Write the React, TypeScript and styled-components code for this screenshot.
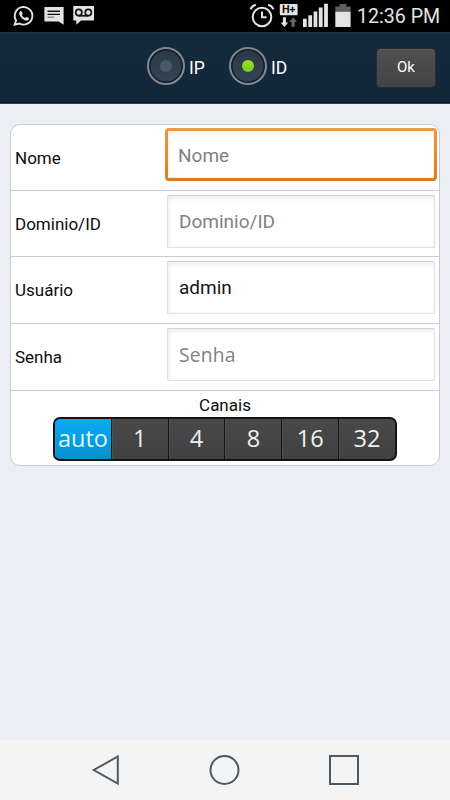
import React, { useState } from "react";
import styled, { createGlobalStyle, css } from "styled-components";

const GlobalStyle = createGlobalStyle`
  *, *::before, *::after { box-sizing: border-box; }
  html, body { margin: 0; padding: 0; }
  body { font-family: Roboto, "Liberation Sans", sans-serif; background: #edeef3; }
`;

const Screen = styled.div`
  display: flex;
  flex-direction: column;
  width: 450px;
  height: 800px;
  overflow: hidden;
  background: #edeef3;
`;

const StatusBar = styled.header`
  display: flex;
  justify-content: space-between;
  height: 32px;
  flex: none;
  background: #000;
  color: #e4e4e4;
`;

const StatusIcons = styled.svg`
  display: block;
  height: 32px;
`;

const StatusRight = styled.div`
  display: flex;
  padding-right: 9px;
`;

const Clock = styled.span`
  width: 84px;
  margin-left: 5px;
  font-size: 19.6px;
  line-height: 33px;
  white-space: nowrap;
`;

const TopBar = styled.div`
  display: flex;
  align-items: center;
  height: 72px;
  flex: none;
  padding: 0 14px 4px 147px;
  background: linear-gradient(#18334a 0, #13293c 3px, #12283a 68px, #0a1b2b 71px, #5b6876 72px);
`;

const RadioOption = styled.button`
  display: flex;
  align-items: center;
  width: 82px;
  padding: 0;
  border: 0;
  background: none;
  color: #fff;
  font: 17.5px/24px Roboto, sans-serif;
  text-align: left;
`;

const RadioRing = styled.span`
  display: flex;
  align-items: center;
  justify-content: center;
  width: 38px;
  height: 38px;
  margin-right: 4px;
  flex: none;
  border: 2px solid #808890;
  border-radius: 50%;
  background: linear-gradient(#2a3947, #344453);
  box-shadow: inset 0 0 0 1.5px #101b27;
`;

const RadioDot = styled.span<{ $on: boolean }>`
  width: 12px;
  height: 12px;
  border-radius: 50%;
  background: ${(p) => (p.$on ? "linear-gradient(#95e52c, #7bcb14)" : "#4d5862")};
`;

const RadioLabel = styled.span`
  padding-top: 4px;
`;

const OkButton = styled.button`
  width: 60px;
  height: 40px;
  margin: 3px 0 0 auto;
  padding: 0 0 2px;
  border: 1px solid #292b2d;
  border-radius: 4px;
  background: linear-gradient(#505050, #434343);
  box-shadow: inset 0 1px 0 #5c5c5c;
  color: #fff;
  font: 15px/20px Roboto, sans-serif;
`;

const Content = styled.main`
  flex: 1;
  padding: 20px 10px 0;
`;

const Card = styled.form`
  height: 342px;
  border: 1px solid #c3cad8;
  border-radius: 10px;
  background: #fff;
  overflow: hidden;
`;

const Row = styled.label`
  display: flex;
  height: 66.7px;
  border-bottom: 1px solid #c6ccda;
  &:first-child { height: 65.6px; }
`;

const RowLabel = styled.span`
  width: 156px;
  padding: 22px 0 0 4px;
  flex: none;
  color: #0c0c0c;
  font-size: 17px;
  line-height: 22px;
`;

const Input = styled.input<{ $active?: boolean; $fallback?: boolean }>`
  width: 268px;
  height: 53px;
  margin-top: 4px;
  padding: 0 0 0 11px;
  border: 1px solid #dedfe2;
  border-top-color: #d3d4d6;
  border-radius: 1px;
  outline: 0;
  background: #fff;
  box-shadow: inset 0 4px 6px -2px #ededee, inset 2px 0 4px -1px #f0f0f1;
  color: #141414;
  font: ${(p) => (p.$fallback ? '19.3px/26px "Open Sans", "Noto Sans"' : "19px/26px Roboto")}, sans-serif;
  letter-spacing: ${(p) => (p.$fallback ? "0.2px" : "0")};
  &::placeholder { color: #818181; opacity: 1; }
  ${(p) =>
    p.$active &&
    css`
      width: 272px;
      height: 53px;
      margin: 3px 0 0 -2px;
      padding: 1px 0 0 10px;
      border: 3px solid transparent;
      border-radius: 4px;
      background: linear-gradient(#fff, #fff) padding-box,
        linear-gradient(#eb9b40, #dc7b20) border-box;
      box-shadow: inset 0 0 0 1px #fff2df, inset 0 5px 6px -2px #f2f2f2;
    `}
`;

const Channels = styled.div`
  display: flex;
  flex-direction: column;
  align-items: center;
  padding-top: 4px;
`;

const ChannelsTitle = styled.span`
  padding-bottom: 1px;
  color: #0c0c0c;
  font-size: 17px;
  line-height: 21px;
`;

const Segments = styled.div`
  display: flex;
  width: 344px;
  height: 44px;
  border: 2px solid #141414;
  border-radius: 7px;
  overflow: hidden;
  background: #141414;
`;

const Segment = styled.button<{ $on: boolean }>`
  flex: 1 1 0;
  min-width: 0;
  padding: 0 0 1px;
  border: 0;
  border-right: 1.5px solid #161616;
  background: ${(p) => (p.$on ? "linear-gradient(#0aa9f8, #0490cc)" : "linear-gradient(#494949, #414141)")};
  box-shadow: inset 1px 0 0 ${(p) => (p.$on ? "#0aa2e8" : "#505050")};
  color: ${(p) => (p.$on ? "#dff7ff" : "#f0f0f0")};
  font: 23.5px/30px "Open Sans", "Noto Sans", sans-serif;
  &:last-child { border-right: 0; }
`;

const NavBar = styled.nav`
  display: flex;
  justify-content: center;
  align-items: center;
  gap: 88px;
  height: 60px;
  flex: none;
  padding-right: 1px;
  background: #f4f4f4;
`;

const NavIcon = styled.svg`
  width: 31px;
  height: 32px;
  fill: none;
  stroke: #4d5963;
  stroke-width: 2;
`;

const Notifications = () => (
  <StatusIcons width="110" viewBox="0 0 110 32" fill="#e4e4e4">
    <path d="M14.7 24.7l1.4-4.3a8.8 8.8 0 1 1 3.3 3.1z" fill="none" stroke="#e4e4e4" strokeWidth="1.9" />
    <path d="M20.1 11.4c.5-.6 1.4-.5 1.7.2l.8 1.8c.2.5-.3 1-.8 1.6.8 1.5 1.9 2.5 3.5 3.1.6-.8 1-1.4 1.6-1.1l1.8.9c.7.5-.1 1.9-.7 2.3-1.4.9-3.3.2-4.9-.9-1.7-1.2-3.7-3.4-3.9-5.5-.1-1 .3-1.8.9-2.4z" />
    <path d="M44.4 7H63.6V24.8L58.8 21.5H44.4z" />
    <path d="M47.5 11.2H60M47.5 14.4H60" stroke="#111" strokeWidth="1.4" />
    <path d="M47.5 17.2H54" stroke="#777" strokeWidth="1.2" />
    <path d="M73.3 6H94V20.4H81L76.3 24.7V20.4H73.3z" />
    <g fill="none" stroke="#111" strokeWidth="1.7">
      <circle cx="78.8" cy="12.5" r="3.1" />
      <circle cx="88.3" cy="12.5" r="3.1" />
      <path d="M78.8 15.8h9.5" />
    </g>
  </StatusIcons>
);

const SystemState = () => (
  <StatusIcons width="106" viewBox="246 0 106 32" fill="#e4e4e4">
    <g fill="none" stroke="#e4e4e4" strokeWidth="2">
      <circle cx="262" cy="17" r="9.3" />
      <path d="M262 11.6v5.7h4.5" />
      <path d="M250.5 9.2q1.6-3.4 5.3-4.5M273.5 9.2q-1.6-3.4-5.3-4.5" />
    </g>
    <rect x="279.8" y="4" width="17.8" height="11.2" rx="1" />
    <text x="288.7" y="13.2" fill="#111" fontFamily="Roboto, sans-serif" fontSize="10.8" fontWeight="700" textAnchor="middle">H+</text>
    <path d="M282.9 17.3h3v5.2h2.3l-3.8 4.6-3.8-4.6h2.3z" />
    <path d="M291.5 26.8h3.2v-4.9h2.3l-3.9-4.6-3.9 4.6h2.3z" fill="#666" />
    <path d="M303 18.7h3.7V27H303zM308.3 15.2h3.8V27h-3.8zM313.6 11.5h3.7V27h-3.7zM318.8 7.5h3.8V27h-3.8zM324.1 3.7h3.8V27h-3.8z" />
    <path d="M335.3 12V6.4h4.2V4h6.8v2.4h4.3V12z" fill="#5e5e5e" />
    <path d="M335.3 11.8h15.3V27h-15.3z" />
  </StatusIcons>
);

const FIELDS = [
  { label: "Nome", placeholder: "Nome", value: "" },
  { label: "Dominio/ID", placeholder: "Dominio/ID", value: "" },
  { label: "Usuário", placeholder: "Usuário", value: "admin" },
  { label: "Senha", placeholder: "Senha", value: "" },
];

const CHANNELS = ["auto", "1", "4", "8", "16", "32"];

export default function App() {
  const [mode, setMode] = useState("ID");
  const [channel, setChannel] = useState("auto");
  const [active, setActive] = useState("Nome");

  return (
    <>
      <GlobalStyle />
      <Screen>
        <StatusBar>
          <Notifications />
          <StatusRight>
            <SystemState />
            <Clock>12:36 PM</Clock>
          </StatusRight>
        </StatusBar>
        <TopBar>
          {["IP", "ID"].map((name) => (
            <RadioOption key={name} onClick={() => setMode(name)}>
              <RadioRing>
                <RadioDot $on={mode === name} />
              </RadioRing>
              <RadioLabel>{name}</RadioLabel>
            </RadioOption>
          ))}
          <OkButton>Ok</OkButton>
        </TopBar>
        <Content>
          <Card>
            {FIELDS.map((f) => (
              <Row key={f.label}>
                <RowLabel>{f.label}</RowLabel>
                <Input
                  $active={active === f.label}
                  $fallback={f.label === "Senha"}
                  onFocus={() => setActive(f.label)}
                  placeholder={f.placeholder}
                  defaultValue={f.value}
                />
              </Row>
            ))}
            <Channels>
              <ChannelsTitle>Canais</ChannelsTitle>
              <Segments>
                {CHANNELS.map((c) => (
                  <Segment key={c} type="button" $on={channel === c} onClick={() => setChannel(c)}>
                    {c}
                  </Segment>
                ))}
              </Segments>
            </Channels>
          </Card>
        </Content>
        <NavBar>
          <NavIcon viewBox="0 0 31 32">
            <path d="M27.8 2.5v27L3.8 16z" />
          </NavIcon>
          <NavIcon viewBox="0 0 31 32">
            <circle cx="15.5" cy="16" r="14" />
          </NavIcon>
          <NavIcon viewBox="0 0 31 32">
            <rect x="2" y="2" width="28" height="28" />
          </NavIcon>
        </NavBar>
      </Screen>
    </>
  );
}
